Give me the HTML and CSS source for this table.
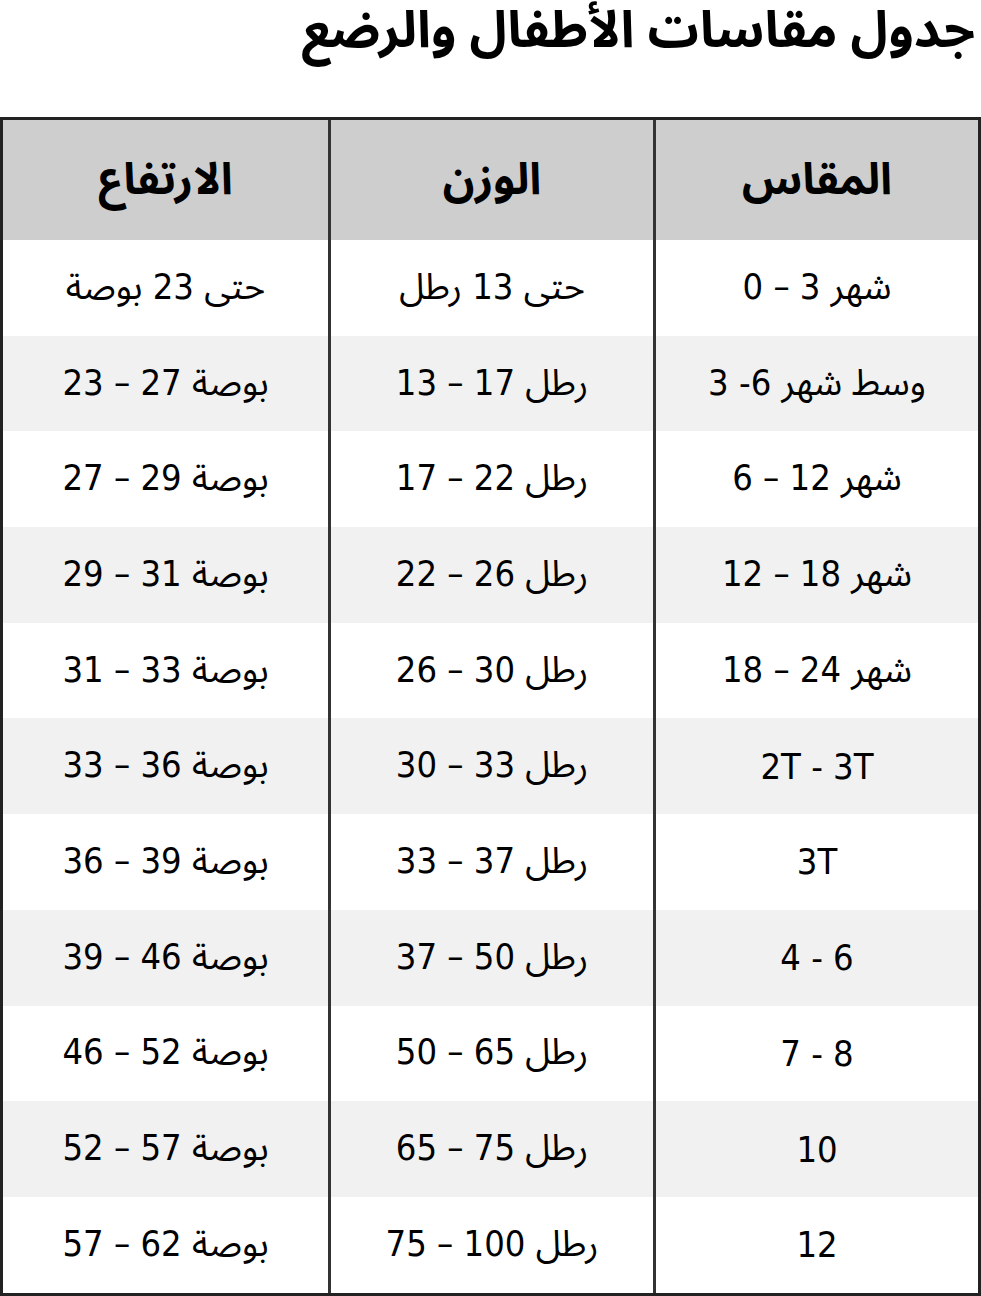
FILE: index.html
```html
<!DOCTYPE html>
<html lang="ar" dir="rtl">
<head>
<meta charset="utf-8">
<title>جدول مقاسات الأطفال والرضع</title>
<link rel="stylesheet" href="styles.css">
</head>
<body>
<h1 class="title">جدول مقاسات الأطفال والرضع</h1>
<table class="size-table">
  <thead>
    <tr>
      <th>المقاس</th>
      <th>الوزن</th>
      <th>الارتفاع</th>
    </tr>
  </thead>
  <tbody>
    <tr><td><span class="ar">شهر</span> 3 – 0</td><td><span class="ar">حتى</span> 13 <span class="ar">رطل</span></td><td><span class="ar">حتى</span> 23 <span class="ar">بوصة</span></td></tr>
    <tr><td><span class="ar">وسط شهر</span> 6- 3</td><td><span class="ar">رطل</span> 17 – 13</td><td><span class="ar">بوصة</span> 27 – 23</td></tr>
    <tr><td><span class="ar">شهر</span> 12 – 6</td><td><span class="ar">رطل</span> 22 – 17</td><td><span class="ar">بوصة</span> 29 – 27</td></tr>
    <tr><td><span class="ar">شهر</span> 18 – 12</td><td><span class="ar">رطل</span> 26 – 22</td><td><span class="ar">بوصة</span> 31 – 29</td></tr>
    <tr><td><span class="ar">شهر</span> 24 – 18</td><td><span class="ar">رطل</span> 30 – 26</td><td><span class="ar">بوصة</span> 33 – 31</td></tr>
    <tr><td><span class="ltr">2T - 3T</span></td><td><span class="ar">رطل</span> 33 – 30</td><td><span class="ar">بوصة</span> 36 – 33</td></tr>
    <tr><td>3T</td><td><span class="ar">رطل</span> 37 – 33</td><td><span class="ar">بوصة</span> 39 – 36</td></tr>
    <tr><td><span class="ltr">4 - 6</span></td><td><span class="ar">رطل</span> 50 – 37</td><td><span class="ar">بوصة</span> 46 – 39</td></tr>
    <tr><td><span class="ltr">7 - 8</span></td><td><span class="ar">رطل</span> 65 – 50</td><td><span class="ar">بوصة</span> 52 – 46</td></tr>
    <tr><td>10</td><td><span class="ar">رطل</span> 75 – 65</td><td><span class="ar">بوصة</span> 57 – 52</td></tr>
    <tr><td>12</td><td><span class="ar">رطل</span> 100 – 75</td><td><span class="ar">بوصة</span> 62 – 57</td></tr>
  </tbody>
</table>
</body>
</html>
```

FILE: styles.css
```css
html, body {
  margin: 0;
  padding: 0;
  background: #fff;
}

body {
  font-family: "DejaVu Sans", sans-serif;
  color: #000;
  direction: rtl;
}

.title {
  margin: 0;
  padding: 0 6px 0 0;
  height: 117px;
  box-sizing: border-box;
  font-family: "Noto Sans Arabic", "DejaVu Sans", sans-serif;
  font-size: 51px;
  font-weight: bold;
  line-height: 62px;
  text-align: right;
  white-space: nowrap;
}

.ltr {
  direction: ltr;
  unicode-bidi: embed;
}

.ar {
  font-family: "Noto Sans Arabic", "DejaVu Sans", sans-serif;
  font-stretch: normal;
}

.size-table {
  width: 100%;
  table-layout: fixed;
  border-collapse: separate;
  border-spacing: 0;
  border: 3px solid #222;
}

.size-table th,
.size-table td {
  text-align: center;
  vertical-align: middle;
  padding: 0;
  border-left: 3px solid #333;
}

.size-table th:last-child,
.size-table td:last-child {
  border-left: none;
}

.size-table th {
  height: 120px;
  background: #cecece;
  font-family: "Noto Sans Arabic", "DejaVu Sans", sans-serif;
  font-size: 44px;
  font-weight: bold;
}

.size-table td {
  height: 95.7px;
  font-family: "DejaVu Sans Condensed", "DejaVu Sans", sans-serif;
  font-stretch: condensed;
  font-size: 36px;
  font-weight: normal;
}

.size-table tbody tr:nth-child(even) td {
  background: #f1f1f1;
}
```
